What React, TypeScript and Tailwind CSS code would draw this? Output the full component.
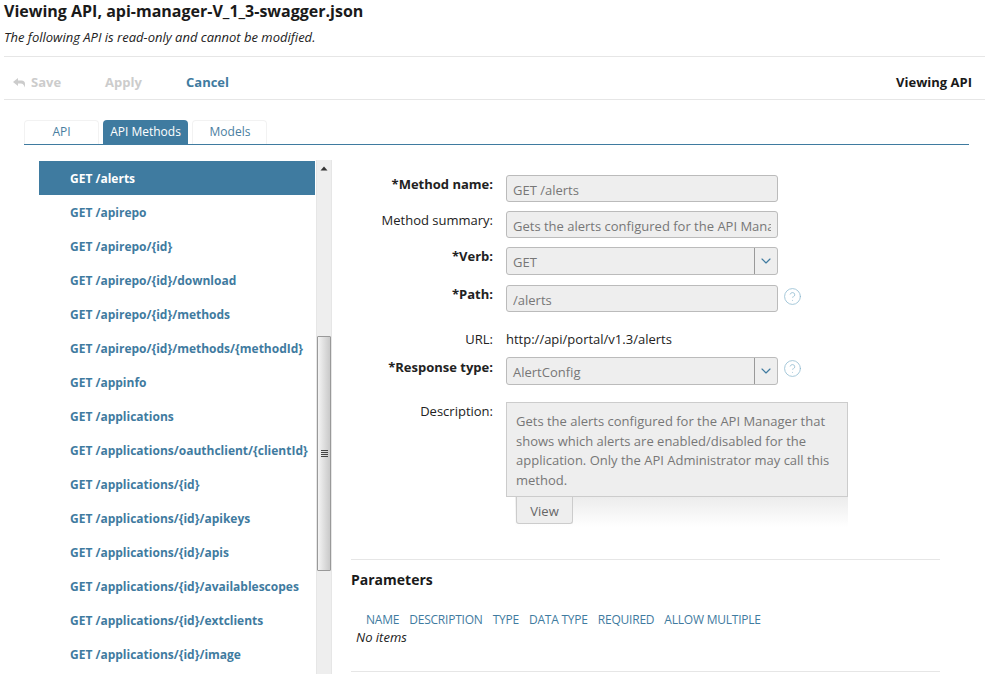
import { CircleHelp, ChevronDown } from 'lucide-react';

const methods = [
  'GET /alerts',
  'GET /apirepo',
  'GET /apirepo/{id}',
  'GET /apirepo/{id}/download',
  'GET /apirepo/{id}/methods',
  'GET /apirepo/{id}/methods/{methodId}',
  'GET /appinfo',
  'GET /applications',
  'GET /applications/oauthclient/{clientId}',
  'GET /applications/{id}',
  'GET /applications/{id}/apikeys',
  'GET /applications/{id}/apis',
  'GET /applications/{id}/availablescopes',
  'GET /applications/{id}/extclients',
  'GET /applications/{id}/image',
];

const columns = ['NAME', 'DESCRIPTION', 'TYPE', 'DATA TYPE', 'REQUIRED', 'ALLOW MULTIPLE'];

function Label({ children, bold }: { children: string; bold?: boolean }) {
  return (
    <div
      className={`w-[142px] shrink-0 text-right text-[13px] leading-[18px] text-[#222] ${
        bold ? 'font-bold' : ''
      }`}
    >
      {children}
    </div>
  );
}

function TextField({ value }: { value: string }) {
  return (
    <div className="h-[27px] w-[272px] rounded-[3px] border border-[#bbb] bg-[#eee] px-[6px] text-[13px] leading-[28px] text-[#777]">
      <div className="overflow-hidden whitespace-nowrap">{value}</div>
    </div>
  );
}

function SelectField({ value }: { value: string }) {
  return (
    <div className="flex h-[28px] w-[272px] items-stretch overflow-hidden rounded-[3px] border border-[#bbb] bg-[#eee] text-[13px] text-[#777]">
      <div className="flex-1 px-[6px] leading-[28px]">{value}</div>
      <div className="flex w-[23px] items-center justify-center border-l border-[#999]">
        <ChevronDown size={16} strokeWidth={1.75} className="text-[#3f7ba0]" />
      </div>
    </div>
  );
}

function Help() {
  return <CircleHelp size={19} strokeWidth={1} className="-ml-[8px] mt-[2px] text-[#8fbbd0]" />;
}

export default function App() {
  return (
    <div className="h-[674px] w-[985px] overflow-hidden bg-white font-['Open_Sans',sans-serif] text-[13px] text-[#222]">
      <header className="pl-[4px]">
        <h1 className="text-[16px] leading-[22px] font-bold text-[#1a1a1a]">
          Viewing API, api-manager-V_1_3-swagger.json
        </h1>
        <p className="mt-[6px] text-[13px] leading-[18px] italic">
          The following API is read-only and cannot be modified.
        </p>
        <div className="mt-[10px] flex h-[44px] items-center border-y border-[#e6e6e6] pt-[10px] pr-[13px]">
          <button className="ml-[9px] flex w-[92px] items-center gap-[6px] text-[13px] font-bold text-[#ccc]">
            <svg width="12" height="10" viewBox="0 0 12 10" fill="#ccc">
              <path d="M0 4 5 0v2.500h3.500Q12 2.500 12 6v3.500L11 7.500Q10 5.500 8 5.500H5V8z" />
            </svg>
            Save
          </button>
          <button className="w-[81px] text-left text-[13px] font-bold text-[#ccc]">Apply</button>
          <button className="text-[13px] font-bold text-[#3f7ba0]">Cancel</button>
          <div className="ml-auto text-[13px] font-bold text-[#1a1a1a]">Viewing API</div>
        </div>
      </header>

      <nav className="mt-[20px] ml-[24px] flex h-[25px] w-[945px] items-end border-b border-[#3f7ba0] text-[12px]">
        <div className="flex h-[24px] w-[75px] items-center justify-center rounded-t-[4px] border border-b-0 border-[#f2f2f2] pb-px text-[#4a7ea0]">
          API
        </div>
        <div className="ml-[4px] flex h-[24px] w-[85px] items-center justify-center rounded-t-[4px] bg-[#3f7ba0] pb-px text-white">
          API Methods
        </div>
        <div className="ml-[4px] flex h-[24px] w-[75px] items-center justify-center rounded-t-[4px] border border-b-0 border-[#f2f2f2] pb-px pl-px text-[#4a7ea0]">
          Models
        </div>
      </nav>

      <div className="flex">
        <aside className="mt-[16px] ml-[39px] flex h-[520px] w-[293px] shrink-0">
          <ul className="w-[276px] overflow-hidden">
            {methods.map((m, i) => (
              <li
                key={m}
                className={`flex h-[34px] items-center pt-[2px] pl-[31px] text-[12px] font-bold whitespace-nowrap ${
                  i === 0 ? 'bg-[#3f7ba0] text-white' : 'text-[#3f7ba0]'
                }`}
              >
                {m}
              </li>
            ))}
          </ul>
          <div className="-mt-px ml-[1px] flex w-[16px] flex-col border-x border-[#e6e6e6] bg-[#eee]">
            <svg width="14" height="14" viewBox="0 0 14 14" className="mt-[3px] shrink-0" fill="#333">
              <path d="M7 3.500 10.500 7.500h-7z" />
            </svg>
            <div className="mt-[159px] flex h-[235px] shrink-0 items-center justify-center rounded-[1px] border border-[#999] bg-gradient-to-r from-[#f4f4f4] to-[#c9c9c9]">
              <div className="flex w-[7px] flex-col gap-[1px]">
                <div className="h-px bg-[#444]" />
                <div className="h-px bg-[#444]" />
                <div className="h-px bg-[#444]" />
                <div className="h-px bg-[#444]" />
              </div>
            </div>
          </div>
        </aside>

        <main className="mt-[15px] w-[609px] pl-[19px]">
          <div className="flex flex-col">
            <div className="flex gap-[13px] pt-[15px]">
              <Label bold>*Method name:</Label>
              <TextField value="GET /alerts" />
            </div>
            <div className="mt-[9px] flex gap-[13px]">
              <Label>Method summary:</Label>
              <TextField value="Gets the alerts configured for the API Manager that shows which alerts" />
            </div>
            <div className="mt-[9px] flex gap-[13px]">
              <Label bold>*Verb:</Label>
              <SelectField value="GET" />
            </div>
            <div className="mt-[10px] flex gap-[13px]">
              <Label bold>*Path:</Label>
              <TextField value="/alerts" />
              <Help />
            </div>
            <div className="mt-[18px] flex gap-[13px]">
              <Label>URL:</Label>
              <div className="text-[13px] leading-[18px]">http://api/portal/v1.3/alerts</div>
            </div>
            <div className="mt-[9px] flex gap-[13px]">
              <div className="pt-px">
                <Label bold>*Response type:</Label>
              </div>
              <SelectField value="AlertConfig" />
              <Help />
            </div>
            <div className="mt-[17px] flex gap-[13px]">
              <Label>Description:</Label>
              <div className="relative w-[342px]">
                <div className="h-[95px] border border-[#ccc] bg-[#eee] px-[9px] pt-[9px] text-[13px] leading-[19.5px] text-[#777]">
                  Gets the alerts configured for the API Manager that shows which alerts are
                  enabled/disabled for the application. Only the API Administrator may call this
                  method.
                </div>
                <div className="ml-[9px] h-[30px] bg-gradient-to-b from-[#ececec] to-white pl-px">
                  <button className="h-[27px] w-[57px] rounded-b-[3px] border border-t-0 border-[#ccc] bg-[#eee] pt-[3px] text-[13px] text-[#666]">
                    View
                  </button>
                </div>
              </div>
            </div>
          </div>

          <section className="mt-[32px] w-[589px] border-y border-[#e6e6e6] pb-[25px]">
            <h2 className="mt-[10px] text-[14px] leading-[20px] font-bold text-[#1a1a1a]">
              Parameters
            </h2>
            <div className="mt-[21px] flex gap-[10px] pl-[15px] text-[12px] leading-[18px] tracking-[-0.22px] text-[#3f7ba0]">
              {columns.map((c) => (
                <span key={c}>{c}</span>
              ))}
            </div>
            <p className="-mt-px pl-[5px] text-[13px] leading-[18px] italic">No items</p>
          </section>
        </main>
      </div>
    </div>
  );
}
